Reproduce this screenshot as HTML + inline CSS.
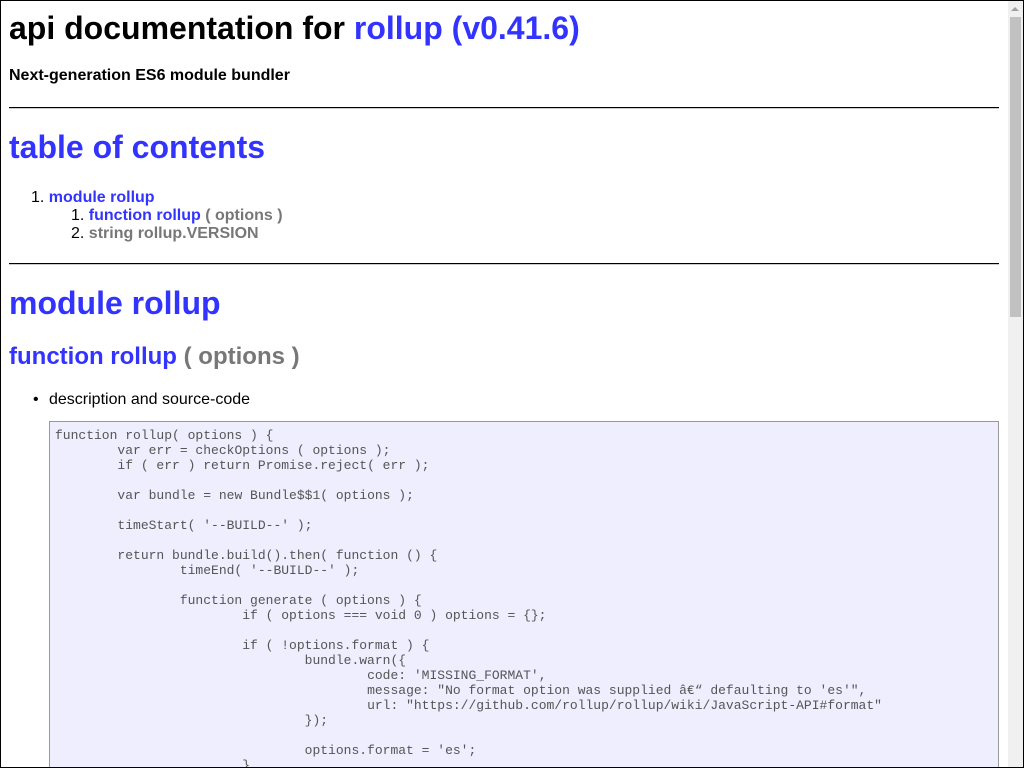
<!DOCTYPE html>
<html><head><meta charset="utf-8"><style>
html,body{margin:0;padding:0;}
body{width:1024px;height:768px;overflow:hidden;position:relative;font-family:"Liberation Sans",sans-serif;background:#fff;}
.frame{position:absolute;left:0;top:0;width:1022px;height:766px;border:1px solid #000;overflow:hidden;}
.sb{position:absolute;left:1008px;top:1px;width:15px;height:766px;background:#f0f0f0;}
.thumb{position:absolute;left:2px;top:16px;width:11px;height:300px;background:#c1c1c1;}
.arr{position:absolute;left:3px;top:6px;width:0;height:0;border-left:4px solid transparent;border-right:4px solid transparent;border-bottom:4px solid #a0a0a0;}
.a{position:absolute;white-space:nowrap;}
.b{color:#33f;}
.g{color:#777;}
.hr{position:absolute;left:8px;width:990px;height:0;border-top:1px solid #000;border-bottom:1px solid #ccc;}
pre{position:absolute;left:48px;top:420px;width:937px;height:340px;margin:0;padding:6px 6px 0 5px;background:#eef;border:1px solid #999;font:13px/15px "Liberation Mono",monospace;color:#555;tab-size:8;overflow:hidden;}
</style></head><body>
<div class="frame">
<div class="a" style="left:8px;top:8px;font-size:32px;font-weight:bold;line-height:38px;">api documentation for <span class="b">rollup (v0.41.6)</span></div>
<div class="a" style="left:8px;top:66px;font-size:16px;font-weight:bold;line-height:18px;">Next-generation ES6 module bundler</div>
<div class="hr" style="top:106px"></div>
<div class="a b" style="left:8px;top:128px;font-size:32px;font-weight:bold;line-height:37px;">table of contents</div>
<div class="a" style="left:30px;top:188px;font-size:16px;line-height:18px;">1. <b class="b">module rollup</b></div>
<div class="a" style="left:70px;top:206px;font-size:16px;line-height:18px;">1. <b class="b">function rollup</b> <b class="g">( options )</b></div>
<div class="a" style="left:70px;top:224px;font-size:16px;line-height:18px;">2. <b class="g">string rollup.VERSION</b></div>
<div class="hr" style="top:262px"></div>
<div class="a b" style="left:8px;top:284px;font-size:32px;font-weight:bold;line-height:37px;">module rollup</div>
<div class="a" style="left:8px;top:342px;font-size:24px;font-weight:bold;line-height:28px;"><span class="b">function rollup</span> <span class="g">( options )</span></div>
<div class="a" style="left:32px;top:390px;font-size:16px;line-height:18px;">&bull;</div>
<div class="a" style="left:48px;top:390px;font-size:16px;line-height:18px;">description and source-code</div>
<pre>function rollup( options ) {
	var err = checkOptions ( options );
	if ( err ) return Promise.reject( err );

	var bundle = new Bundle$$1( options );

	timeStart( '--BUILD--' );

	return bundle.build().then( function () {
		timeEnd( '--BUILD--' );

		function generate ( options ) {
			if ( options === void 0 ) options = {};

			if ( !options.format ) {
				bundle.warn({
					code: 'MISSING_FORMAT',
					message: "No format option was supplied â€“ defaulting to 'es'",
					url: "https://github.com/rollup/rollup/wiki/JavaScript-API#format"
				});

				options.format = 'es';
			}</pre>
</div>
<div class="sb"><div class="arr"></div><div class="thumb"></div></div>
</body></html>
